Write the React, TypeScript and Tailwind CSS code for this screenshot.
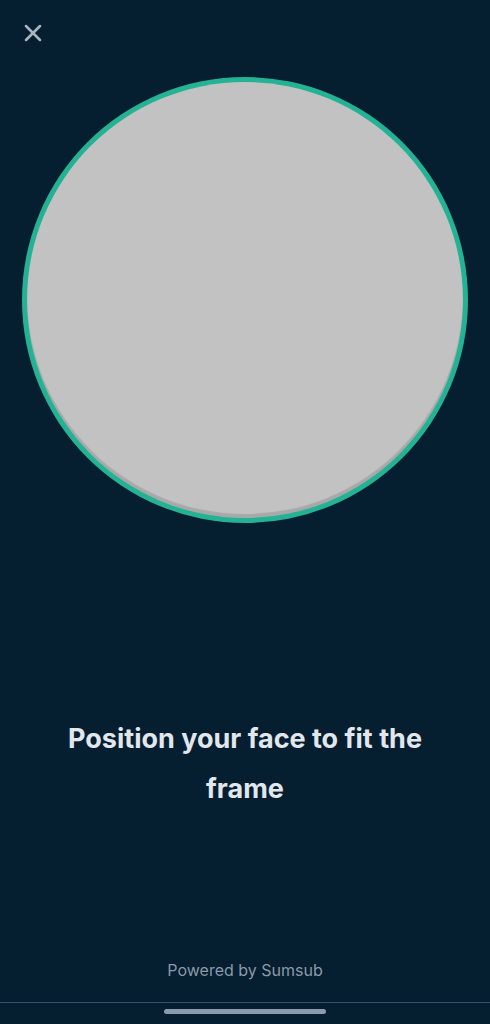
import { X } from "lucide-react";

export default function App() {
  return (
    <div
      className="flex h-[1024px] w-full flex-col overflow-hidden bg-[#051e30]"
      style={{ fontFamily: 'Inter, "Noto Sans", sans-serif' }}
    >
      <div className="px-[19px] pt-[19px]">
        <X className="h-[28px] w-[28px] text-[#a8b4be]" strokeWidth={2.2} />
      </div>

      <div className="mx-auto mt-[30px] h-[446px] w-[446px] rounded-full bg-[#23b394] p-[5px]">
        <div className="h-full w-full rounded-full bg-[#c2c2c2] shadow-[inset_0_-4px_1px_rgba(0,0,0,0.13)]" />
      </div>

      <h1 className="mt-[191px] px-[40px] text-center text-[27px] font-bold leading-[50px] text-[#e1e7ec]">
        Position your face to fit the frame
      </h1>

      <div className="mt-auto flex flex-col items-center">
        <p className="text-[16px] leading-[20px] text-[#8a9aa8]">Powered by Sumsub</p>
        <div className="mt-[22px] h-px w-full bg-[#34506a]" />
        <div className="h-[21px] w-full flex justify-center pt-[6px]">
          <div className="h-[5px] w-[162px] rounded-full bg-[#8b9bab]" />
        </div>
      </div>
    </div>
  );
}
